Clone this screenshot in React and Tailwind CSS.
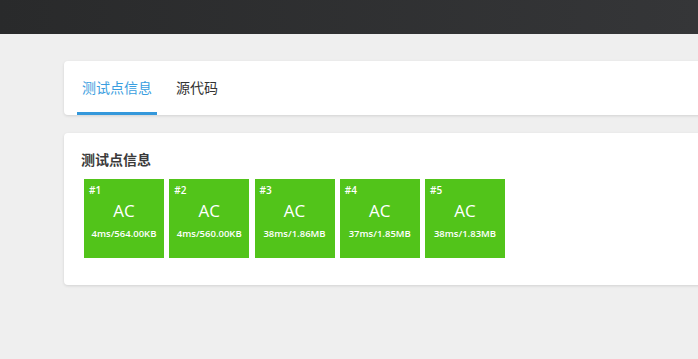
export default function App() {
  const cases = [
    { id: 1, info: '4ms/564.00KB' },
    { id: 2, info: '4ms/560.00KB' },
    { id: 3, info: '38ms/1.86MB' },
    { id: 4, info: '37ms/1.85MB' },
    { id: 5, info: '38ms/1.83MB' },
  ];

  return (
    <div
      className="h-[359px] w-[698px] overflow-hidden bg-[#efefef]"
      style={{ fontFamily: '"Open Sans", "Noto Sans CJK SC", sans-serif' }}
    >
      <div className="h-[34px] bg-gradient-to-r from-[#292a2b] to-[#353638]" />

      <div className="pl-[64px] pt-[27px]">
        <div className="w-[660px] rounded bg-white shadow-[0_1px_3px_rgba(0,0,0,0.12)]">
          <div className="flex h-[54px] pl-[13px]">
            <div className="flex w-[80px] flex-col items-center border-b-[3px] border-[#3498db]">
              <span className="pt-[16px] text-[14px] text-[#3a9ee0]">测试点信息</span>
            </div>
            <div className="flex w-[80px] flex-col items-center">
              <span className="pt-[16px] text-[14px] text-[#333]">源代码</span>
            </div>
          </div>
        </div>

        <div className="mt-[18px] h-[152px] w-[660px] rounded bg-white px-[17px] pt-[17px] shadow-[0_1px_3px_rgba(0,0,0,0.12)]">
          <h3 className="text-[14px] font-bold leading-[20px] text-[#3a3a3a]">测试点信息</h3>
          <div className="mt-[9px] flex gap-[5.25px] pl-[3px]">
            {cases.map((c) => (
              <div key={c.id} className="relative flex h-[79px] w-[80px] flex-col items-center bg-[#52c41a] text-white">
                <span className="absolute left-[5px] top-[4px] text-[10px] font-semibold leading-[14px]">#{c.id}</span>
                <span className="mt-[20px] text-[17px] leading-[24px]">AC</span>
                <span className="mt-[4px] text-[9.5px] font-semibold leading-[14px]">{c.info}</span>
              </div>
            ))}
          </div>
        </div>
      </div>
    </div>
  );
}
